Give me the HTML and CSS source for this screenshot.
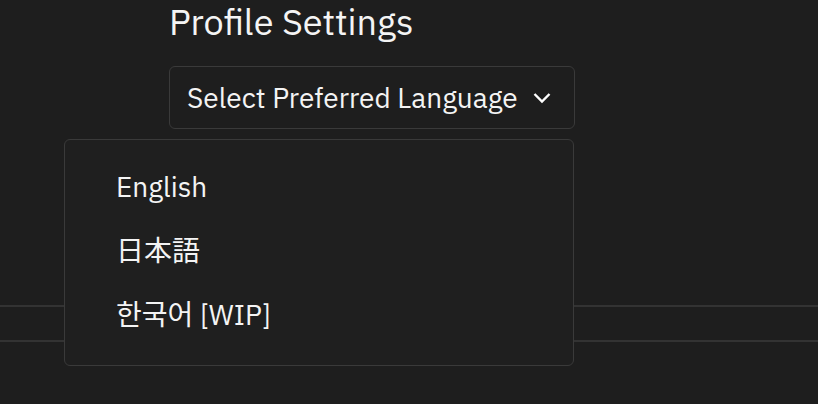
FILE: index.html
```html
<!DOCTYPE html>
<html lang="en">
<head>
<meta charset="utf-8">
<link rel="stylesheet" href="styles.css">
</head>
<body>
<main class="page">
  <section class="settings">
    <h1 class="title">Profile Settings</h1>
    <div class="select-wrap">
      <button class="select">
        <span>Select Preferred Language</span>
        <svg class="chev" width="20" height="20" viewBox="0 0 20 20"><path d="M2.5 6 L10 13.5 L17.5 6" fill="none" stroke="#fff" stroke-width="2.4"/></svg>
      </button>
      <ul class="menu">
        <li class="item">English</li>
        <li class="item">日本語</li>
        <li class="item">한국어 [WIP]</li>
      </ul>
    </div>
  </section>
  <div class="rows">
    <div class="row"></div>
    <div class="row"></div>
  </div>
</main>
</body>
</html>
```
FILE: styles.css
```css
* { box-sizing: border-box; }
html, body { margin: 0; padding: 0; }
body {
  background: #1e1e1e;
  color: #f4f4f4;
  font-family: "IBM Plex Sans", "Noto Sans", "Noto Sans CJK JP", "Noto Sans CJK KR", sans-serif;
  width: 818px;
  height: 404px;
  overflow: hidden;
}
.page { padding-top: 1px; }
.settings { padding-left: 169px; }
.title {
  margin: 0;
  font-size: 36px;
  font-weight: 400;
  line-height: 42px;
}
.select-wrap { position: relative; margin-top: 23px; }
.select {
  display: flex;
  align-items: center;
  gap: 14px;
  width: 406px;
  height: 63px;
  padding: 0 20px 0 17px;
  background: #1e1e1e;
  border: 1.5px solid #3a3a3a;
  border-radius: 6px;
  color: #f4f4f4;
  font-family: inherit;
  font-size: 28px;
}
.menu {
  position: absolute;
  left: -105px;
  top: 73px;
  width: 510px;
  height: 227px;
  margin: 0;
  padding: 15px 0 0 51px;
  list-style: none;
  background: #1f1f1f;
  border: 1.5px solid #3a3a3a;
  border-radius: 6px;
  z-index: 2;
}
.item {
  font-size: 28px;
  height: 64px;
  line-height: 64px;
}
.rows { margin-top: 176px; }
.row { height: 35px; border-top: 2px solid #333; }
```
